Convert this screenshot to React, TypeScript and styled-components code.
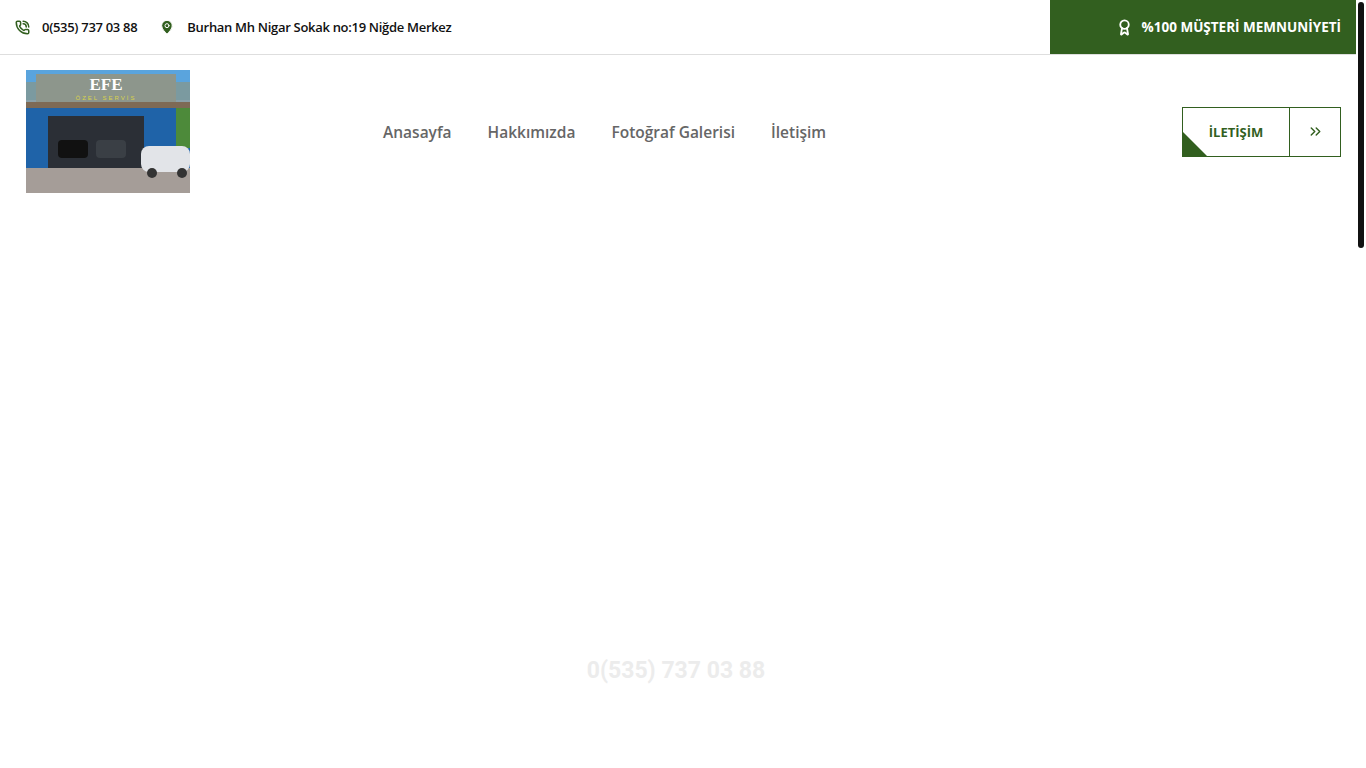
import { Award, ChevronsRight, MapPin, PhoneCall } from "lucide-react";
import styled, { createGlobalStyle } from "styled-components";

const GREEN = "#325f1f";

const Global = createGlobalStyle`
  html, body { margin: 0; padding: 0; background: #fff; overflow: hidden; }
  body { font-family: "Open Sans", "Liberation Sans", sans-serif; }
`;

const navItems = ["Anasayfa", "Hakkımızda", "Fotoğraf Galerisi", "İletişim"];

export default function App() {
  return (
    <Page>
      <Global />
      <TopBar>
        <TopInfo>
          <InfoItem>
            <PhoneCall size={15} color={GREEN} strokeWidth={2.4} />
            0(535) 737 03 88
          </InfoItem>
          <InfoItem>
            <MapPin size={16} color={GREEN} fill={GREEN} stroke="#fff" strokeWidth={1.5} />
            Burhan Mh Nigar Sokak no:19 Niğde Merkez
          </InfoItem>
        </TopInfo>
        <Badge>
          <Award size={17} strokeWidth={2.6} />
          %100 MÜŞTERİ MEMNUNİYETİ
        </Badge>
      </TopBar>

      <Header>
        <Logo aria-label="Efe Özel Servis">
          <svg width="164" height="123" viewBox="0 0 164 123">
            <rect width="164" height="123" fill="#8aa0a8" />
            <rect y="0" width="164" height="30" fill="#7b9aa0" />
            <rect x="0" y="0" width="164" height="12" fill="#5aa4dd" />
            <rect x="10" y="4" width="140" height="28" fill="#8d968c" />
            <text x="80" y="20" fill="#fff" fontSize="17" fontWeight="700" fontFamily="Liberation Serif" textAnchor="middle">EFE</text>
            <text x="80" y="30" fill="#d8d24a" fontSize="6" fontFamily="Liberation Sans" textAnchor="middle" letterSpacing="2">ÖZEL SERVİS</text>
            <rect y="32" width="164" height="6" fill="#7e6a55" />
            <rect y="38" width="164" height="60" fill="#1f63a8" />
            <rect x="22" y="46" width="96" height="52" fill="#2b2f36" />
            <rect x="32" y="70" width="30" height="18" rx="4" fill="#111" />
            <rect x="70" y="70" width="30" height="18" rx="4" fill="#3a3f45" />
            <rect x="150" y="38" width="14" height="40" fill="#4d8a3a" />
            <rect y="98" width="164" height="25" fill="#a59d98" />
            <rect x="115" y="76" width="49" height="26" rx="8" fill="#e2e4e8" />
            <circle cx="126" cy="103" r="5" fill="#333" />
            <circle cx="156" cy="103" r="5" fill="#333" />
          </svg>
        </Logo>
        <Nav>
          {navItems.map((item) => (
            <NavLink key={item}>{item}</NavLink>
          ))}
        </Nav>
        <CtaButton>
          <CtaLabel>İLETİŞİM</CtaLabel>
          <CtaArrow>
            <ChevronsRight size={17} strokeWidth={2} />
          </CtaArrow>
        </CtaButton>
      </Header>

      <Hero>
        <FaintPhone>0(535) 737 03 88</FaintPhone>
      </Hero>
      <ScrollThumb />
    </Page>
  );
}

const Page = styled.div`
  position: relative;
  width: 1366px;
  height: 768px;
  padding-right: 10px;
  box-sizing: border-box;
`;

const TopBar = styled.div`
  display: flex;
  align-items: stretch;
  justify-content: space-between;
  height: 54px;
  border-bottom: 1px solid #dedede;
`;

const TopInfo = styled.div`
  display: flex;
  align-items: center;
  gap: 22px;
  padding-left: 15px;
`;

const InfoItem = styled.div`
  display: flex;
  align-items: center;
  gap: 12px;
  font-size: 13px;
  font-weight: 600;
  color: #111;
  letter-spacing: -0.3px;
`;

const Badge = styled.div`
  display: flex;
  align-items: center;
  justify-content: flex-end;
  gap: 9px;
  width: 306px;
  padding-right: 15px;
  box-sizing: border-box;
  background: ${GREEN};
  color: #fff;
  font-size: 13.5px;
  font-weight: 700;
`;

const Header = styled.div`
  display: flex;
  align-items: center;
  padding: 15px 15px 0 26px;
`;

const Logo = styled.div`
  width: 164px;
  height: 123px;
  svg { display: block; }
`;

const Nav = styled.nav`
  display: flex;
  gap: 36px;
  margin-left: 193px;
  flex: 1;
`;

const NavLink = styled.a`
  font-size: 15.5px;
  font-weight: 600;
  color: #666;
  cursor: pointer;
`;

const CtaButton = styled.div`
  position: relative;
  display: flex;
  height: 50px;
  border: 1px solid ${GREEN};
  box-sizing: border-box;
  &::before {
    content: "";
    position: absolute;
    left: 0;
    bottom: 0;
    border-left: 24px solid ${GREEN};
    border-top: 24px solid transparent;
  }
`;

const CtaLabel = styled.div`
  display: flex;
  align-items: center;
  justify-content: center;
  width: 106px;
  border-right: 1px solid ${GREEN};
  color: ${GREEN};
  font-size: 13px;
  font-weight: 700;
`;

const CtaArrow = styled.div`
  display: grid;
  place-items: center;
  width: 50px;
  color: ${GREEN};
`;

const Hero = styled.div`
  display: flex;
  justify-content: center;
  padding-top: 464px;
  padding-right: 4px;
`;

const FaintPhone = styled.div`
  font-family: Roboto, sans-serif;
  font-size: 23px;
  font-weight: 700;
  color: #ececec;
`;

const ScrollThumb = styled.div`
  position: absolute;
  top: 2px;
  right: 2px;
  width: 6px;
  height: 246px;
  border-radius: 3px;
  background: #111;
`;
